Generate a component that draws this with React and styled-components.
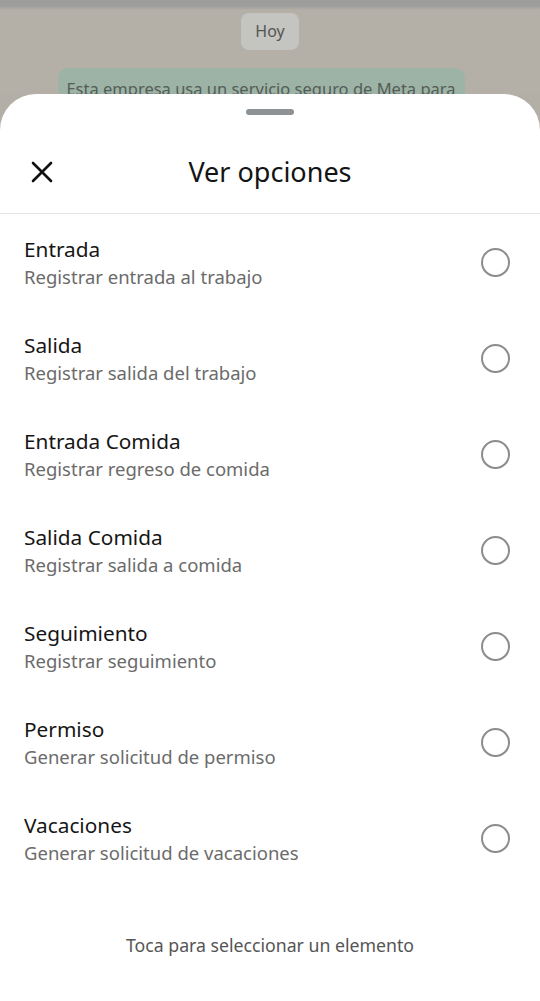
import React from 'react';
import styled, { createGlobalStyle } from 'styled-components';

const GlobalStyle = createGlobalStyle`
  html, body {
    margin: 0;
    padding: 0;
    background: #b3afa7;
  }
  * {
    box-sizing: border-box;
  }
`;

const Screen = styled.div`
  width: 540px;
  height: 1001px;
  display: flex;
  flex-direction: column;
  background: #b3afa7;
  font-family: 'Noto Sans', 'Open Sans', sans-serif;
  overflow: hidden;
`;

const Backdrop = styled.div`
  height: 94px;
  flex-shrink: 0;
  overflow: hidden;
  display: flex;
  flex-direction: column;
  align-items: center;
  background: linear-gradient(#9d9d9b 0, #9d9d9b 6px, #b4b0a8 10px, #b4b0a8 100%);
`;

const DayPill = styled.div`
  margin-top: 13px;
  padding: 7px 14px;
  background: #c4c4c1;
  border-radius: 8px;
  font-size: 16px;
  color: #555;
  line-height: 23px;
`;

const Notice = styled.div`
  margin: 18px 18px 0 0;
  width: 407px;
  padding: 10px 0 0;
  background: #9cb3a5;
  border-radius: 10px;
  text-align: center;
  font-size: 16.5px;
  color: #555d58;
  line-height: 22px;
`;

const Sheet = styled.div`
  flex: 1;
  background: #fff;
  border-radius: 36px 36px 0 0;
  display: flex;
  flex-direction: column;
`;

const Handle = styled.div`
  width: 48px;
  height: 6px;
  border-radius: 3px;
  background: #8d9296;
  margin: 15px auto 0;
`;

const Header = styled.div`
  height: 99px;
  display: flex;
  align-items: center;
  border-bottom: 1px solid #e5e5e5;
  padding: 15px 0 0 28px;
`;

const CloseButton = styled.button`
  border: none;
  background: none;
  padding: 0;
  width: 28px;
  height: 28px;
  display: flex;
  align-items: center;
  justify-content: center;
  cursor: pointer;
`;

const Title = styled.h2`
  flex: 1;
  margin: 0 56px 0 0;
  text-align: center;
  font-size: 27px;
  font-weight: 400;
  color: #141414;
`;

const List = styled.div`
  display: flex;
  flex-direction: column;
`;

const Row = styled.div`
  height: 96px;
  display: flex;
  align-items: center;
  padding: 0 30px 0 24px;
`;

const RowText = styled.div`
  flex: 1;
  display: flex;
  flex-direction: column;
  gap: 3px;
`;

const RowTitle = styled.div`
  font-size: 20.8px;
  color: #161616;
  line-height: 25px;
`;

const RowSubtitle = styled.div`
  font-size: 18.5px;
  color: #6b6b6b;
  line-height: 23px;
`;

const Radio = styled.div`
  width: 29px;
  height: 29px;
  border-radius: 50%;
  border: 2.5px solid #8c8c8c;
`;

const Footer = styled.div`
  flex: 1;
  display: flex;
  align-items: center;
  justify-content: center;
  font-size: 17.7px;
  color: #555;
  padding-top: 2px;
`;

const options = [
  { title: 'Entrada', subtitle: 'Registrar entrada al trabajo' },
  { title: 'Salida', subtitle: 'Registrar salida del trabajo' },
  { title: 'Entrada Comida', subtitle: 'Registrar regreso de comida' },
  { title: 'Salida Comida', subtitle: 'Registrar salida a comida' },
  { title: 'Seguimiento', subtitle: 'Registrar seguimiento' },
  { title: 'Permiso', subtitle: 'Generar solicitud de permiso' },
  { title: 'Vacaciones', subtitle: 'Generar solicitud de vacaciones' },
];

const App = () => {
  return (
    <Screen>
      <GlobalStyle />
      <Backdrop>
        <DayPill>Hoy</DayPill>
        <Notice>Esta empresa usa un servicio seguro de Meta para</Notice>
      </Backdrop>
      <Sheet>
        <Handle />
        <Header>
          <CloseButton aria-label="Cerrar">
            <svg width="22" height="22" viewBox="0 0 22 22">
              <path d="M2 2 L20 20 M20 2 L2 20" stroke="#111" strokeWidth="2.6" strokeLinecap="round" />
            </svg>
          </CloseButton>
          <Title>Ver opciones</Title>
        </Header>
        <List>
          {options.map(o => (
            <Row key={o.title}>
              <RowText>
                <RowTitle>{o.title}</RowTitle>
                <RowSubtitle>{o.subtitle}</RowSubtitle>
              </RowText>
              <Radio />
            </Row>
          ))}
        </List>
        <Footer>Toca para seleccionar un elemento</Footer>
      </Sheet>
    </Screen>
  );
};

export default App;
